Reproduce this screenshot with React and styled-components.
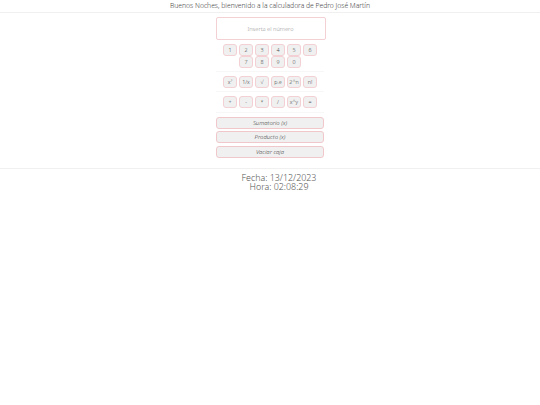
import styled, { createGlobalStyle } from "styled-components";

const GlobalStyle = createGlobalStyle`
  body {
    margin: 0;
    background: #fff;
    font-family: "Noto Sans", "Open Sans", sans-serif;
    font-weight: 300;
    color: #666;
  }
`

const HeaderStyled = styled.div`
  height: 12px;
  border-bottom: 1px solid #f0f0f0;
  font-size: 6.75px;
  line-height: 11px;
  text-align: center;
  color: #444;
`
const MainStyled = styled.div`
  display: flex;
  flex-direction: column;
  align-items: center;
  padding-top: 4px;
  height: 156px;
  box-sizing: border-box;
  border-bottom: 1px solid #f0f0f0;
`
const InputStyled = styled.input`
  box-sizing: border-box;
  width: 110px;
  height: 23px;
  margin-bottom: 3.5px;
  margin-left: 1px;
  border: 1px solid #f3d0d3;
  border-radius: 2px;
  background: #fff;
  font-family: inherit;
  font-size: 5.7px;
  font-weight: 300;
  text-align: center;
  outline: none;
  &::placeholder {
    color: #999;
  }
`
const RowStyled = styled.div`
  display: flex;
  justify-content: center;
  gap: 1.5px;
  margin-bottom: ${(props) => props.$mb || 0}px;
`
const SectionStyled = styled.div`
  width: 108px;
  padding: ${(props) => props.$py}px 0;
  border-bottom: 1px solid #f7f7f7;
`
const KeyStyled = styled.button`
  box-sizing: border-box;
  width: 14.5px;
  height: 12px;
  padding: 0;
  border: 1px solid #f3d0d3;
  border-radius: 3px;
  background: #f0f0f0;
  color: #444;
  font-family: inherit;
  font-size: 5.4px;
  font-weight: 300;
  line-height: 10px;
`
const ActionsStyled = styled.div`
  display: flex;
  flex-direction: column;
  gap: 2.5px;
  width: 108px;
  margin-top: 4px;
`
const WideStyled = styled.button`
  box-sizing: border-box;
  height: 12px;
  padding: 0;
  border: 1px solid #f0c8cc;
  border-radius: 3px;
  background: #f0f0f0;
  color: #444;
  font-family: inherit;
  font-size: 5.9px;
  font-style: italic;
  font-weight: 300;
  line-height: 10px;
`
const ClockStyled = styled.div`
  padding: 3.5px 0 0 18px;
  font-size: 8.9px;
  line-height: 9.5px;
  text-align: center;
  color: #555;
`

const rows = [
    ["1", "2", "3", "4", "5", "6"],
    ["7", "8", "9", "0"],
]
const powers = ["x²", "1/x", "√", "p.e", "2^n", "n!"]
const operators = ["+", "-", "*", "/", "x^y", "="]
const actions = ["Sumatorio (x)", "Producto (x)", "Vaciar caja"]

export default function App() {
    return (
        <>
            <GlobalStyle/>
            <HeaderStyled>Buenos Noches, bienvenido a la calculadora de Pedro José Martín</HeaderStyled>
            <MainStyled>
                <InputStyled placeholder="Inserta el número"/>
                {rows.map((row, i) => (
                    <RowStyled key={i} $mb={0.3}>
                        {row.map((k) => <KeyStyled key={k}>{k}</KeyStyled>)}
                    </RowStyled>
                ))}
                <SectionStyled $py={1.4}/>
                <SectionStyled $py={3.75}>
                    <RowStyled>
                        {powers.map((k) => <KeyStyled key={k}>{k}</KeyStyled>)}
                    </RowStyled>
                </SectionStyled>
                <SectionStyled $py={3.75}>
                    <RowStyled>
                        {operators.map((k) => <KeyStyled key={k}>{k}</KeyStyled>)}
                    </RowStyled>
                </SectionStyled>
                <ActionsStyled>
                    {actions.map((a) => <WideStyled key={a}>{a}</WideStyled>)}
                </ActionsStyled>
            </MainStyled>
            <ClockStyled>
                <div>Fecha: 13/12/2023</div>
                <div>Hora: 02:08:29</div>
            </ClockStyled>
        </>
    )
}
